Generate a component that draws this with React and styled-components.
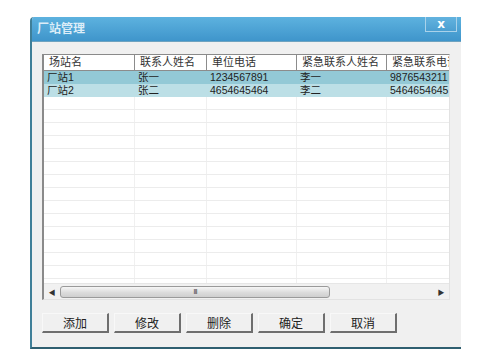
import React from "react";
import styled, { createGlobalStyle } from "styled-components";

const GlobalStyle = createGlobalStyle`
  body {
    margin: 0;
    background: #ffffff;
    font-family: "Liberation Sans", "Noto Sans CJK SC", sans-serif;
  }
`;

const Page = styled.div`
  width: 494px;
  height: 360px;
  padding: 17px 0 0 30px;
  box-sizing: border-box;
`;

const Window = styled.div`
  width: 431px;
  height: 332px;
  display: flex;
  flex-direction: column;
  background: #f0f0f0;
  border-left: 2px solid #3f7f98;
  border-bottom: 2px solid #2f5f70;
  box-sizing: border-box;
  border-top-left-radius: 4px;
  overflow: hidden;
`;

const TitleBar = styled.div`
  height: 25px;
  flex: none;
  display: flex;
  align-items: flex-start;
  justify-content: space-between;
  background: linear-gradient(#5db2df, #3f95cb);
  border-bottom: 1px solid #6fa3c0;
  box-sizing: border-box;
  padding-left: 5px;
`;

const Title = styled.span`
  color: #dcedf8;
  font-size: 12px;
  font-weight: bold;
  line-height: 25px;
`;

const CloseButton = styled.div`
  width: 32px;
  height: 15px;
  margin-right: 4px;
  border: 1px solid #a9d2ea;
  border-top: none;
  box-sizing: border-box;
  display: flex;
  align-items: center;
  justify-content: center;
  color: #ffffff;
  font-weight: bold;
  font-size: 12px;
  font-family: "DejaVu Sans", sans-serif;
  background: linear-gradient(#63b3df, #4c9fd1);
`;

const Body = styled.div`
  flex: 1;
  display: flex;
  flex-direction: column;
  padding: 12px 0 0 10px;
`;

const ListBox = styled.div`
  width: 408px;
  height: 246px;
  box-sizing: border-box;
  border-left: 2px solid #8a8a8a;
  border-top: 1px solid #8a8a8a;
  border-right: 1px solid #e2e2e2;
  border-bottom: 1px solid #e2e2e2;
  background: #ffffff;
  display: flex;
  flex-direction: column;
  overflow: hidden;
`;

const Grid = styled.div`
  flex: 1;
  overflow: hidden;
`;

const Row = styled.div`
  display: grid;
  grid-template-columns: 91px 72px 90px 90px 90px;
  height: ${p => (p.$header ? 16 : 13)}px;
  background: ${p => p.$bg || "#ffffff"};
  border-bottom: 1px solid ${p => (p.$header ? "#8c8c8c" : p.$bg ? "transparent" : "#ececec")};
  box-sizing: border-box;
  font-size: ${p => (p.$header ? 11 : 10.5)}px;
  color: ${p => (p.$header ? "#333" : "#222")};
`;

const Cell = styled.div`
  padding-left: ${p => (p.$header ? 5 : 3)}px;
  line-height: ${p => (p.$header ? 15 : 12)}px;
  white-space: nowrap;
  overflow: hidden;
  border-right: 1px solid ${p => (p.$header ? "#8c8c8c" : p.$filled ? "transparent" : "#f0f0f0")};
`;

const ScrollBar = styled.div`
  height: 15px;
  flex: none;
  display: flex;
  align-items: center;
  background: #f1f1f1;
  border-top: 1px solid #e6e6e6;
`;

const Arrow = styled.div`
  width: 16px;
  display: flex;
  justify-content: center;
  font-size: 7px;
  color: #333;
`;

const Track = styled.div`
  flex: 1;
  height: 100%;
  display: flex;
  align-items: center;
`;

const Thumb = styled.div`
  width: 270px;
  height: 12px;
  box-sizing: border-box;
  border: 1px solid #9a9a9a;
  border-radius: 3px;
  background: linear-gradient(#f6f6f6, #dcdcdc 55%, #cfcfcf);
  display: flex;
  align-items: center;
  justify-content: center;
  font-size: 8px;
  color: #555;
  letter-spacing: -1px;
`;

const Buttons = styled.div`
  display: flex;
  gap: 5px;
  margin-top: 13px;
`;

const Button = styled.div`
  width: 67px;
  height: 20px;
  box-sizing: border-box;
  border-top: 1px solid #f8f8f8;
  border-left: 1px solid #f8f8f8;
  border-right: 2px solid #6e6e6e;
  border-bottom: 2px solid #6e6e6e;
  background: #f0f0f0;
  display: flex;
  align-items: center;
  justify-content: center;
  font-size: 12px;
  color: #222;
`;

const columns = ["场站名", "联系人姓名", "单位电话", "紧急联系人姓名", "紧急联系电话"];
const data = [
  { bg: "#93c9d6", cells: ["厂站1", "张一", "1234567891", "李一", "9876543211"] },
  { bg: "#bcdfe6", cells: ["厂站2", "张二", "4654645464", "李二", "5464654645"] },
];

const App = () => {
  const empty = Array.from({ length: 15 });
  return (
    <Page>
      <GlobalStyle />
      <Window>
        <TitleBar>
          <Title>厂站管理</Title>
          <CloseButton>x</CloseButton>
        </TitleBar>
        <Body>
          <ListBox>
            <Grid>
              <Row $header>
                {columns.map(c => (
                  <Cell $header key={c}>{c}</Cell>
                ))}
              </Row>
              {data.map(r => (
                <Row key={r.cells[0]} $bg={r.bg}>
                  {r.cells.map((c, i) => (
                    <Cell $filled key={i}>{c}</Cell>
                  ))}
                </Row>
              ))}
              {empty.map((_, i) => (
                <Row key={"e" + i}>
                  {columns.map(c => (
                    <Cell key={c} />
                  ))}
                </Row>
              ))}
            </Grid>
            <ScrollBar>
              <Arrow>◀</Arrow>
              <Track>
                <Thumb>III</Thumb>
              </Track>
              <Arrow>▶</Arrow>
            </ScrollBar>
          </ListBox>
          <Buttons>
            {["添加", "修改", "删除", "确定", "取消"].map(b => (
              <Button key={b}>{b}</Button>
            ))}
          </Buttons>
        </Body>
      </Window>
    </Page>
  );
};

export default App;
